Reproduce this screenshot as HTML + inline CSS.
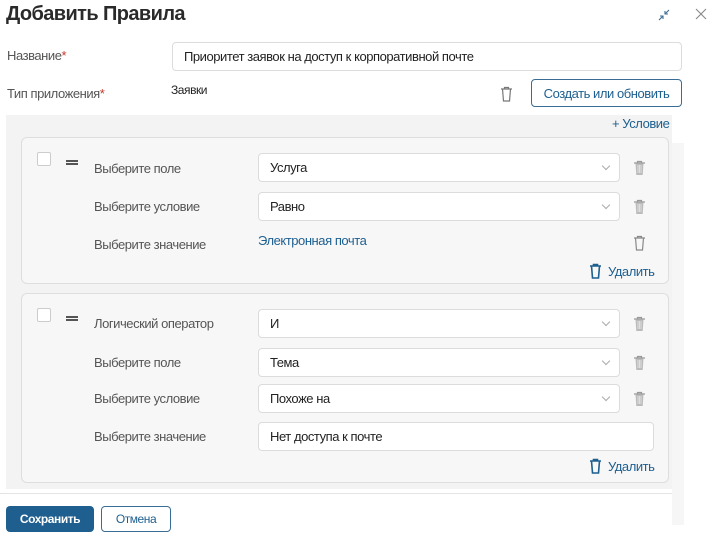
<!DOCTYPE html>
<html><head><meta charset="utf-8"><style>
*{box-sizing:border-box;margin:0;padding:0}
body{width:712px;height:538px;background:#fff;font-family:"Liberation Sans",sans-serif;color:#222;position:relative;overflow:hidden;font-size:13px;letter-spacing:-0.45px}
.a{position:absolute}
.lbl{color:#555}
.inp{position:absolute;background:#fff;border:1px solid #dcdcdc;border-radius:4px;padding-left:11px;display:flex;align-items:center;color:#222}
.chev{position:absolute;right:10px;top:9px;width:6px;height:6px;border-right:1px solid #aaa;border-bottom:1px solid #aaa;transform:rotate(45deg)}
.card{position:absolute;left:21px;width:648px;background:#f7f7f7;border:1px solid #dedede;border-radius:6px}
.cb{position:absolute;left:15px;top:14px;width:14px;height:14px;border:1px solid #ccc;background:#fff;border-radius:2px}
.dr{position:absolute;left:44px;width:12px;height:5px;border-top:2px solid #555;border-bottom:2px solid #555}
.blue{color:#1d5f8f}
</style></head><body>
<div class="a" style="left:6px;top:3px;font-size:20px;font-weight:bold;letter-spacing:-0.6px;color:#2a2a2a">Добавить Правила</div>
<svg class="a" style="left:657px;top:8px" width="14" height="14" viewBox="0 0 14 14" fill="none" stroke="#3a6d95" stroke-width="1.1"><path d="M8 6L12 2M8 3v3h3M6 8L2 12M3 8h3v3"/></svg>
<svg class="a" style="left:695px;top:8px" width="12" height="12" viewBox="0 0 12 12" stroke="#888" stroke-width="1.1"><path d="M1 1L11 11M11 1L1 11"/></svg>
<div class="a lbl" style="left:7px;top:48px">Название<span style="color:#c0392b">*</span></div>
<div class="inp" style="left:172px;top:42px;width:510px;height:29px">Приоритет заявок на доступ к корпоративной почте</div>
<div class="a lbl" style="left:7px;top:86px">Тип приложения<span style="color:#c0392b">*</span></div>
<div class="a" style="left:171px;top:83px;font-size:12px">Заявки</div>
<svg class="a" style="left:500px;top:86px" width="13" height="16" viewBox="0 0 13 16" fill="none" stroke="#777" stroke-width="1.2"><path d="M1 3h11M4.5 3V1.5h4V3M2.5 3l1 12h6l1-12"/></svg>
<div class="a blue" style="left:531px;top:79px;width:151px;height:28px;border:1px solid #3a6d95;border-radius:4px;display:flex;align-items:center;justify-content:center">Создать или обновить</div>
<div class="a" style="left:6px;top:115px;width:666px;height:374px;background:#f3f3f3"></div>
<div class="a" style="left:672px;top:143px;width:12px;height:382px;background:#f6f6f6"></div>
<div class="a blue" style="left:612px;top:116px">+ Условие</div>

<div class="card" style="top:137px;height:147px">
<div class="cb"></div><div class="dr" style="top:22px"></div>
<div class="a lbl" style="left:72px;top:23px">Выберите поле</div>
<div class="inp" style="left:236px;top:15px;width:362px;height:29px">Услуга<div class="chev"></div></div>
<div class="a lbl" style="left:72px;top:61px">Выберите условие</div>
<div class="inp" style="left:236px;top:54px;width:362px;height:29px">Равно<div class="chev"></div></div>
<div class="a lbl" style="left:72px;top:99px">Выберите значение</div>
<div class="a blue" style="left:236px;top:95px">Электронная почта</div>
<div class="a blue" style="left:586px;top:126px">Удалить</div>
</div>
<div class="card" style="top:293px;height:190px">
<div class="cb"></div><div class="dr" style="top:22px"></div>
<div class="a lbl" style="left:72px;top:22px">Логический оператор</div>
<div class="inp" style="left:236px;top:15px;width:362px;height:29px">И<div class="chev"></div></div>
<div class="a lbl" style="left:72px;top:61px">Выберите поле</div>
<div class="inp" style="left:236px;top:54px;width:362px;height:29px">Тема<div class="chev"></div></div>
<div class="a lbl" style="left:72px;top:97px">Выберите условие</div>
<div class="inp" style="left:236px;top:90px;width:362px;height:29px">Похоже на<div class="chev"></div></div>
<div class="a lbl" style="left:72px;top:135px">Выберите значение</div>
<div class="inp" style="left:236px;top:128px;width:396px;height:29px">Нет доступа к почте</div>
<div class="a blue" style="left:586px;top:165px">Удалить</div>
</div>
<svg width="0" height="0" style="position:absolute"><defs>
<symbol id="tf" viewBox="0 0 13 16"><path d="M1 3h11M4.5 3V1.5h4V3" stroke="#999" stroke-width="1.2" fill="none"/><path d="M2.5 3.5h8l-.8 11.5h-6.4z" fill="#bbb"/><path d="M5 5v8M6.5 5v8M8 5v8" stroke="#eee" stroke-width=".7"/></symbol>
<symbol id="to" viewBox="0 0 13 16"><path d="M1 3h11M4.5 3V1.5h4V3M2.5 3l1 12h6l1-12" stroke="#888" stroke-width="1.2" fill="none"/></symbol>
<symbol id="tb" viewBox="0 0 13 16"><path d="M1 3h11M4.5 3V1.5h4V3M2.5 3l1 12h6l1-12" stroke="#1d5f8f" stroke-width="1.6" fill="none"/></symbol>
</defs></svg>
<svg class="a" style="left:633px;top:160px" width="13" height="16" viewBox="0 0 13 16"><use href="#tf"/></svg>
<svg class="a" style="left:633px;top:199px" width="13" height="16" viewBox="0 0 13 16"><use href="#tf"/></svg>
<svg class="a" style="left:633px;top:235px" width="13" height="16" viewBox="0 0 13 16"><use href="#to"/></svg>
<svg class="a" style="left:589px;top:263px" width="13" height="16" viewBox="0 0 13 16"><use href="#tb"/></svg>
<svg class="a" style="left:633px;top:316px" width="13" height="16" viewBox="0 0 13 16"><use href="#tf"/></svg>
<svg class="a" style="left:633px;top:355px" width="13" height="16" viewBox="0 0 13 16"><use href="#tf"/></svg>
<svg class="a" style="left:633px;top:391px" width="13" height="16" viewBox="0 0 13 16"><use href="#tf"/></svg>
<svg class="a" style="left:589px;top:458px" width="13" height="16" viewBox="0 0 13 16"><use href="#tb"/></svg>
<div class="a" style="left:0;top:493px;width:672px;height:1px;background:#e4e4e4"></div>
<div class="a" style="left:6px;top:506px;width:88px;height:26px;background:#1f5f8f;border-radius:4px;color:#fff;display:flex;align-items:center;justify-content:center;font-weight:bold;font-size:12px">Сохранить</div>
<div class="a blue" style="left:101px;top:506px;width:70px;height:26px;border:1px solid #3a6d95;border-radius:4px;display:flex;align-items:center;justify-content:center;font-size:12px">Отмена</div>
</body></html>
